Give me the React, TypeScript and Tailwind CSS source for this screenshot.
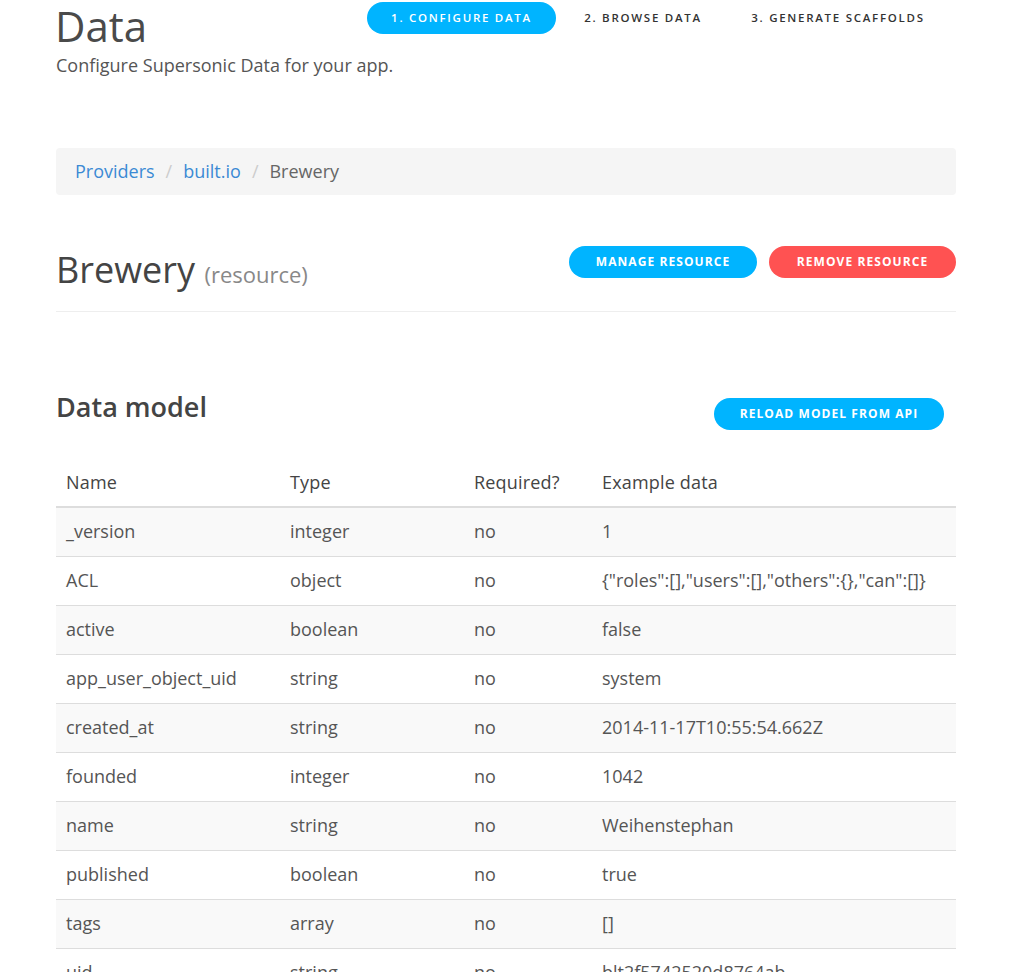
import React from "react";

const rows: [string, string, string, string][] = [
  ["_version", "integer", "no", "1"],
  ["ACL", "object", "no", '{"roles":[],"users":[],"others":{},"can":[]}'],
  ["active", "boolean", "no", "false"],
  ["app_user_object_uid", "string", "no", "system"],
  ["created_at", "string", "no", "2014-11-17T10:55:54.662Z"],
  ["founded", "integer", "no", "1042"],
  ["name", "string", "no", "Weihenstephan"],
  ["published", "boolean", "no", "true"],
  ["tags", "array", "no", "[]"],
  ["uid", "string", "no", "blt2f5742520d8764ab"],
];

export default function App() {
  return (
    <div
      className="w-[1013px] h-[972px] overflow-hidden bg-white text-[#555]"
      style={{ fontFamily: '"Open Sans", "Liberation Sans", sans-serif' }}
    >
      <div className="w-[900px] ml-[56px]">
        <div className="flex">
          <div className="w-[311px] shrink-0 whitespace-nowrap">
            <h1 className="text-[42px] leading-[50px] text-[#4a4a4a] pt-[1px] -ml-[1px]">Data</h1>
            <p className="text-[18px] leading-[24px] text-[#555] mt-[2px]">Configure Supersonic Data for your app.</p>
          </div>
          <div className="flex items-start pt-[2px] text-[11.5px] tracking-[0.15em] font-semibold whitespace-nowrap">
            <div className="h-[32px] w-[189px] rounded-full bg-[#00b4ff] text-white flex items-center justify-center">1. CONFIGURE DATA</div>
            <div className="h-[32px] w-[174px] flex items-center justify-center text-[#333]">2. BROWSE DATA</div>
            <div className="h-[32px] w-[216px] flex items-center justify-center text-[#333]">3. GENERATE SCAFFOLDS</div>
          </div>
        </div>

        <div className="mt-[71px] h-[47px] rounded-[4px] bg-[#f5f5f5] flex items-center px-[19px] text-[18px]">
          <span className="text-[#3b8ad4]">Providers</span>
          <span className="text-[#ccc] px-[11px]">/</span>
          <span className="text-[#3b8ad4]">built.io</span>
          <span className="text-[#ccc] px-[11px]">/</span>
          <span className="text-[#666]">Brewery</span>
        </div>

        <div className="mt-[51px] flex items-start justify-between">
          <h2 className="mt-[3px] text-[36px] leading-[42px] text-[#444]">
            Brewery <span className="text-[22px] text-[#888]">(resource)</span>
          </h2>
          <div className="flex gap-[12px] text-[12px] font-bold tracking-[0.09em] text-white whitespace-nowrap">
            <div className="h-[32px] w-[188px] rounded-full bg-[#00b4ff] flex items-center justify-center">MANAGE RESOURCE</div>
            <div className="h-[32px] w-[187px] rounded-full bg-[#ff5252] flex items-center justify-center">REMOVE RESOURCE</div>
          </div>
        </div>
        <div className="mt-[16px] h-px bg-[#eee]" />

        <div className="mt-[86px] flex items-start justify-between pr-[12px]">
          <h3 className="text-[27px] leading-[32px] font-semibold text-[#444] mt-[-7px]">Data model</h3>
          <div className="h-[32px] w-[230px] rounded-full bg-[#00b4ff] flex items-center justify-center text-white text-[12px] font-bold tracking-[0.09em] whitespace-nowrap">RELOAD MODEL FROM API</div>
        </div>

        <table className="mt-[28px] w-full text-[18px] border-collapse">
          <thead>
            <tr className="h-[49px] border-b-[2px] border-[#ddd] text-left">
              <th className="w-[224px] px-[10px] font-medium text-[#444] tracking-[0.01em]">Name</th>
              <th className="w-[184px] px-[10px] font-medium text-[#444] tracking-[0.01em]">Type</th>
              <th className="w-[128px] px-[10px] font-medium text-[#444] tracking-[0.01em]">Required?</th>
              <th className="px-[10px] font-medium text-[#444] tracking-[0.01em]">Example data</th>
            </tr>
          </thead>
          <tbody>
            {rows.map((r, i) => (
              <tr key={r[0]} className={`h-[49px] border-t border-[#ddd] ${i % 2 === 0 ? "bg-[#f9f9f9]" : "bg-white"}`}>
                {r.map((c, j) => (
                  <td key={j} className="px-[10px] text-[#555] whitespace-nowrap">{c}</td>
                ))}
              </tr>
            ))}
          </tbody>
        </table>
      </div>
    </div>
  );
}
